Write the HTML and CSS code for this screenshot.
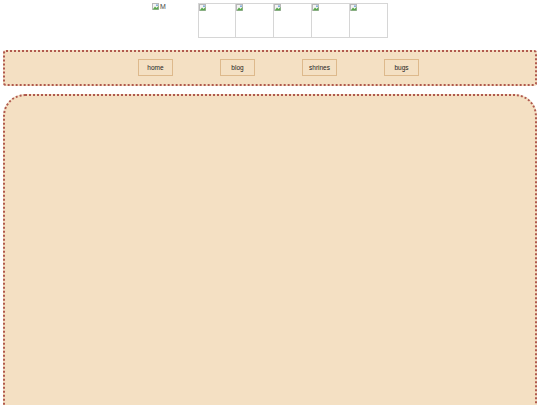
FILE: index.html
```html
<!DOCTYPE html>
<html>
<head>
	<meta charset="UTF-8">
	<title>home</title>
	<link rel="stylesheet" href="styles.css">
</head>
<body>

	<div id="header">
		<span class="logo"><svg class="broken" viewBox="0 0 8 8"><rect x="0.5" y="0.5" width="6" height="6" fill="#f4f4f4" stroke="#b9b9b9"/><path d="M1 6 L3 3.5 L4.5 5 L6.5 3 L6.5 6.5 L1 6.5 Z" fill="#5aa84e"/><circle cx="5" cy="2.2" r="0.9" fill="#6a9fd4"/></svg>M</span>
		<div class="buttons">
			<span class="badge"><svg class="broken" viewBox="0 0 8 8"><rect x="0.5" y="0.5" width="6" height="6" fill="#f4f4f4" stroke="#b9b9b9"/><path d="M1 6 L3 3.5 L4.5 5 L6.5 3 L6.5 6.5 L1 6.5 Z" fill="#5aa84e"/><circle cx="5" cy="2.2" r="0.9" fill="#6a9fd4"/></svg></span>
			<span class="badge"><svg class="broken" viewBox="0 0 8 8"><rect x="0.5" y="0.5" width="6" height="6" fill="#f4f4f4" stroke="#b9b9b9"/><path d="M1 6 L3 3.5 L4.5 5 L6.5 3 L6.5 6.5 L1 6.5 Z" fill="#5aa84e"/><circle cx="5" cy="2.2" r="0.9" fill="#6a9fd4"/></svg></span>
			<span class="badge"><svg class="broken" viewBox="0 0 8 8"><rect x="0.5" y="0.5" width="6" height="6" fill="#f4f4f4" stroke="#b9b9b9"/><path d="M1 6 L3 3.5 L4.5 5 L6.5 3 L6.5 6.5 L1 6.5 Z" fill="#5aa84e"/><circle cx="5" cy="2.2" r="0.9" fill="#6a9fd4"/></svg></span>
			<span class="badge"><svg class="broken" viewBox="0 0 8 8"><rect x="0.5" y="0.5" width="6" height="6" fill="#f4f4f4" stroke="#b9b9b9"/><path d="M1 6 L3 3.5 L4.5 5 L6.5 3 L6.5 6.5 L1 6.5 Z" fill="#5aa84e"/><circle cx="5" cy="2.2" r="0.9" fill="#6a9fd4"/></svg></span>
			<span class="badge"><svg class="broken" viewBox="0 0 8 8"><rect x="0.5" y="0.5" width="6" height="6" fill="#f4f4f4" stroke="#b9b9b9"/><path d="M1 6 L3 3.5 L4.5 5 L6.5 3 L6.5 6.5 L1 6.5 Z" fill="#5aa84e"/><circle cx="5" cy="2.2" r="0.9" fill="#6a9fd4"/></svg></span>
		</div>
	</div>

	<div id="nav">
		<a class="nav-link" href="javascript:">home</a>
		<a class="nav-link" href="javascript:">blog</a>
		<a class="nav-link" href="javascript:">shrines</a>
		<a class="nav-link" href="javascript:">bugs</a>
	</div>

	<div id="main"></div>

</body>
</html>
```
FILE: styles.css
```css
* {
	margin: 0;
	padding: 0;
	box-sizing: border-box;
	text-decoration: none;
}
body {
	padding: 3px 3px 0;
	font-family: "Liberation Sans", Arial, sans-serif;
	font-size: 7px;
	color: #222;
	background: #fff;
	overflow: hidden;
}
#header {
	display: flex;
	height: 47px;
	padding-left: 149px;
}
.logo {
	display: flex;
	align-items: flex-start;
	height: 9px;
	line-height: 8px;
	color: #444;
	width: 46px;
}
.broken {
	width: 8px;
	height: 8px;
	flex: none;
}
.buttons {
	display: flex;
}
.badge {
	display: block;
	width: 38px;
	height: 35px;
	border: 1px solid #d6d6d6;
}
.badge + .badge {
	border-left: none;
}
#nav {
	display: flex;
	gap: 47px;
	height: 36px;
	padding: 7px 0 0 133px;
	background: #f4e0c3;
	border: 2px dotted #b0594e;
	border-radius: 3px;
}
.nav-link {
	display: block;
	width: 35px;
	height: 17px;
	line-height: 15px;
	text-align: center;
	color: #222;
	font-size: 6.5px;
	border: 1px solid #ddb98c;
}
#main {
	margin-top: 8px;
	height: 340px;
	background: #f4e0c3;
	border: 2px dotted #b0594e;
	border-radius: 22px 22px 0 0;
}
```
